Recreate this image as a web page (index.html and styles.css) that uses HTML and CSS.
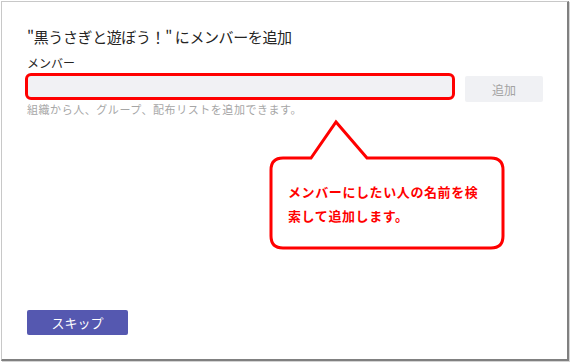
FILE: index.html
```html
<!DOCTYPE html>
<html lang="ja">
<head>
  <meta charset="utf-8">
  <title>メンバーを追加</title>
  <link rel="stylesheet" href="styles.css">
</head>
<body>
  <div id="dialog">
    <h1 class="dialogTitle">"黒うさぎと遊ぼう！" にメンバーを追加</h1>
    <label class="fieldLabel" for="memberInput">メンバー</label>
    <div class="fieldRow">
      <input type="text" id="memberInput" class="memberInput">
      <button class="addButton" disabled>追加</button>
    </div>
    <div class="fieldHint">組織から人、グループ、配布リストを追加できます。</div>

    <div class="footer">
      <button class="skipButton">スキップ</button>
    </div>

    <!-- 吹き出し注釈 -->
    <div class="callout">
      <svg class="calloutShape" width="236" height="132" viewBox="0 0 236 132">
        <path d="M 14 39 H 42 L 67 3 L 98 39 H 222 Q 234 39 234 51 V 117 Q 234 129 222 129 H 14 Q 2 129 2 117 V 51 Q 2 39 14 39 Z"
              fill="#fff" stroke="#ff0000" stroke-width="3" stroke-linejoin="miter"/>
      </svg>
      <div class="calloutText">メンバーにしたい人の名前を検<br>索して追加します。</div>
    </div>
  </div>
</body>
</html>
```

FILE: styles.css
```css
* {
  padding: 0;
  margin: 0;
  box-sizing: border-box;
}

html,
body {
  width: 100%;
  height: 100%;
  background: #fff;
  font-family: "Noto Sans CJK JP", "Noto Sans", sans-serif;
}

#dialog {
  position: relative;
  display: flex;
  flex-direction: column;
  width: 568px;
  height: 360px;
  margin: 1px 0 0 1px;
  padding: 25px 0 24px 25px;
  border-top: 1px solid #c8c8c8;
  border-left: 1px solid #c8c8c8;
  border-right: 2px solid #808080;
  border-bottom: 2px solid #808080;
  box-shadow: 1px 1px 0 #d4d4d4;
}

.dialogTitle {
  font-size: 15px;
  line-height: 20px;
  font-weight: normal;
  letter-spacing: -0.4px;
  color: #252423;
}

.fieldLabel {
  margin-top: 8px;
  font-size: 12px;
  line-height: 16px;
  color: #252423;
}

.fieldRow {
  display: flex;
  align-items: flex-start;
  margin-top: 2px;
}

.memberInput {
  width: 430px;
  height: 27px;
  margin-left: -2px;
  background: #f1f1f4;
  border: 3px solid #ff0000;
  border-radius: 6px;
  outline: none;
}

.addButton {
  width: 78px;
  height: 26px;
  margin: 3px 0 0 10px;
  background: #f0f1f4;
  border: none;
  border-radius: 2px;
  color: #a3a3a3;
  font-family: inherit;
  font-size: 12px;
}

.fieldHint {
  font-size: 11px;
  line-height: 14px;
  letter-spacing: 0.55px;
  color: #a6a6a6;
}

.footer {
  margin-top: auto;
}

.skipButton {
  width: 101px;
  height: 25px;
  background: #5558b0;
  border: none;
  border-radius: 2px;
  color: #fff;
  font-family: inherit;
  font-size: 13px;
}

.callout {
  position: absolute;
  left: 267px;
  top: 117px;
  width: 236px;
  height: 132px;
}

.calloutShape {
  display: block;
}

.calloutText {
  position: absolute;
  left: 19px;
  top: 61px;
  font-size: 13px;
  line-height: 24px;
  letter-spacing: 0.6px;
  font-weight: bold;
  color: #ff0000;
}
```
